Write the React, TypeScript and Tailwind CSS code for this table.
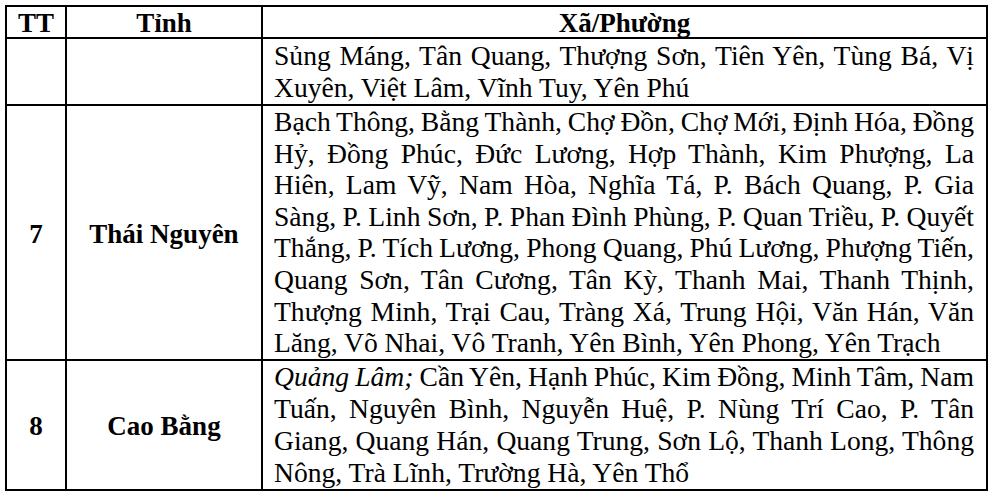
import type { ReactNode } from "react"

type Row = {
  tt: string
  tinh: string
  lines: ReactNode[]
  leading: string
}

const rows: Row[] = [
  {
    tt: "",
    tinh: "",
    leading: "leading-[32px] pt-px",
    lines: [
      "Sủng Máng, Tân Quang, Thượng Sơn, Tiên Yên, Tùng Bá, Vị",
      "Xuyên, Việt Lâm, Vĩnh Tuy, Yên Phú",
    ],
  },
  {
    tt: "7",
    tinh: "Thái Nguyên",
    leading: "leading-[31.6px]",
    lines: [
      "Bạch Thông, Bằng Thành, Chợ Đồn, Chợ Mới, Định Hóa, Đồng",
      "Hỷ, Đồng Phúc, Đức Lương, Hợp Thành, Kim Phượng, La",
      "Hiên, Lam Vỹ, Nam Hòa, Nghĩa Tá, P. Bách Quang, P. Gia",
      "Sàng, P. Linh Sơn, P. Phan Đình Phùng, P. Quan Triều, P. Quyết",
      "Thắng, P. Tích Lương, Phong Quang, Phú Lương, Phượng Tiến,",
      "Quang Sơn, Tân Cương, Tân Kỳ, Thanh Mai, Thanh Thịnh,",
      "Thượng Minh, Trại Cau, Tràng Xá, Trung Hội, Văn Hán, Văn",
      "Lăng, Võ Nhai, Vô Tranh, Yên Bình, Yên Phong, Yên Trạch",
    ],
  },
  {
    tt: "8",
    tinh: "Cao Bằng",
    leading: "leading-[32px]",
    lines: [
      <>
        <i>Quảng Lâm;</i> Cần Yên, Hạnh Phúc, Kim Đồng, Minh Tâm, Nam
      </>,
      "Tuấn, Nguyên Bình, Nguyễn Huệ, P. Nùng Trí Cao, P. Tân",
      "Giang, Quang Hán, Quang Trung, Sơn Lộ, Thanh Long, Thông",
      "Nông, Trà Lĩnh, Trường Hà, Yên Thổ",
    ],
  },
]

export default function App() {
  return (
    <div className="min-h-[500px] w-[994px] bg-white pl-[5px] pt-[5px] font-['Liberation_Serif','Times_New_Roman',serif] text-[27px] text-black">
      <div className="grid w-[983px] grid-cols-[60px_196px_725px] border-l-2 border-t-2 border-black">
        <div className="border-b-2 border-r-2 border-black pt-[2px] text-center font-bold leading-[28px]">TT</div>
        <div className="border-b-2 border-r-2 border-black pt-[2px] text-center font-bold leading-[28px]">Tỉnh</div>
        <div className="border-b-2 border-r-2 border-black pt-[2px] text-center font-bold leading-[28px]">Xã/Phường</div>

        {rows.map((r, i) => (
          <div key={i} className="contents">
            <div className="flex items-center justify-center border-b-2 border-r-2 border-black pt-[3px] font-bold">{r.tt}</div>
            <div className="flex items-center justify-center border-b-2 border-r-2 border-black pt-[3px] font-bold">{r.tinh}</div>
            <div className={`border-b-2 border-r-2 border-black pl-[11px] pr-[12px] text-[27.6px] ${r.leading}`}>
              {r.lines.map((l, j) => (
                <div
                  key={j}
                  className={
                    j < r.lines.length - 1
                      ? "whitespace-nowrap text-justify [text-align-last:justify] [word-spacing:-4px]"
                      : "whitespace-nowrap"
                  }
                >
                  {l}
                </div>
              ))}
            </div>
          </div>
        ))}
      </div>
    </div>
  )
}
